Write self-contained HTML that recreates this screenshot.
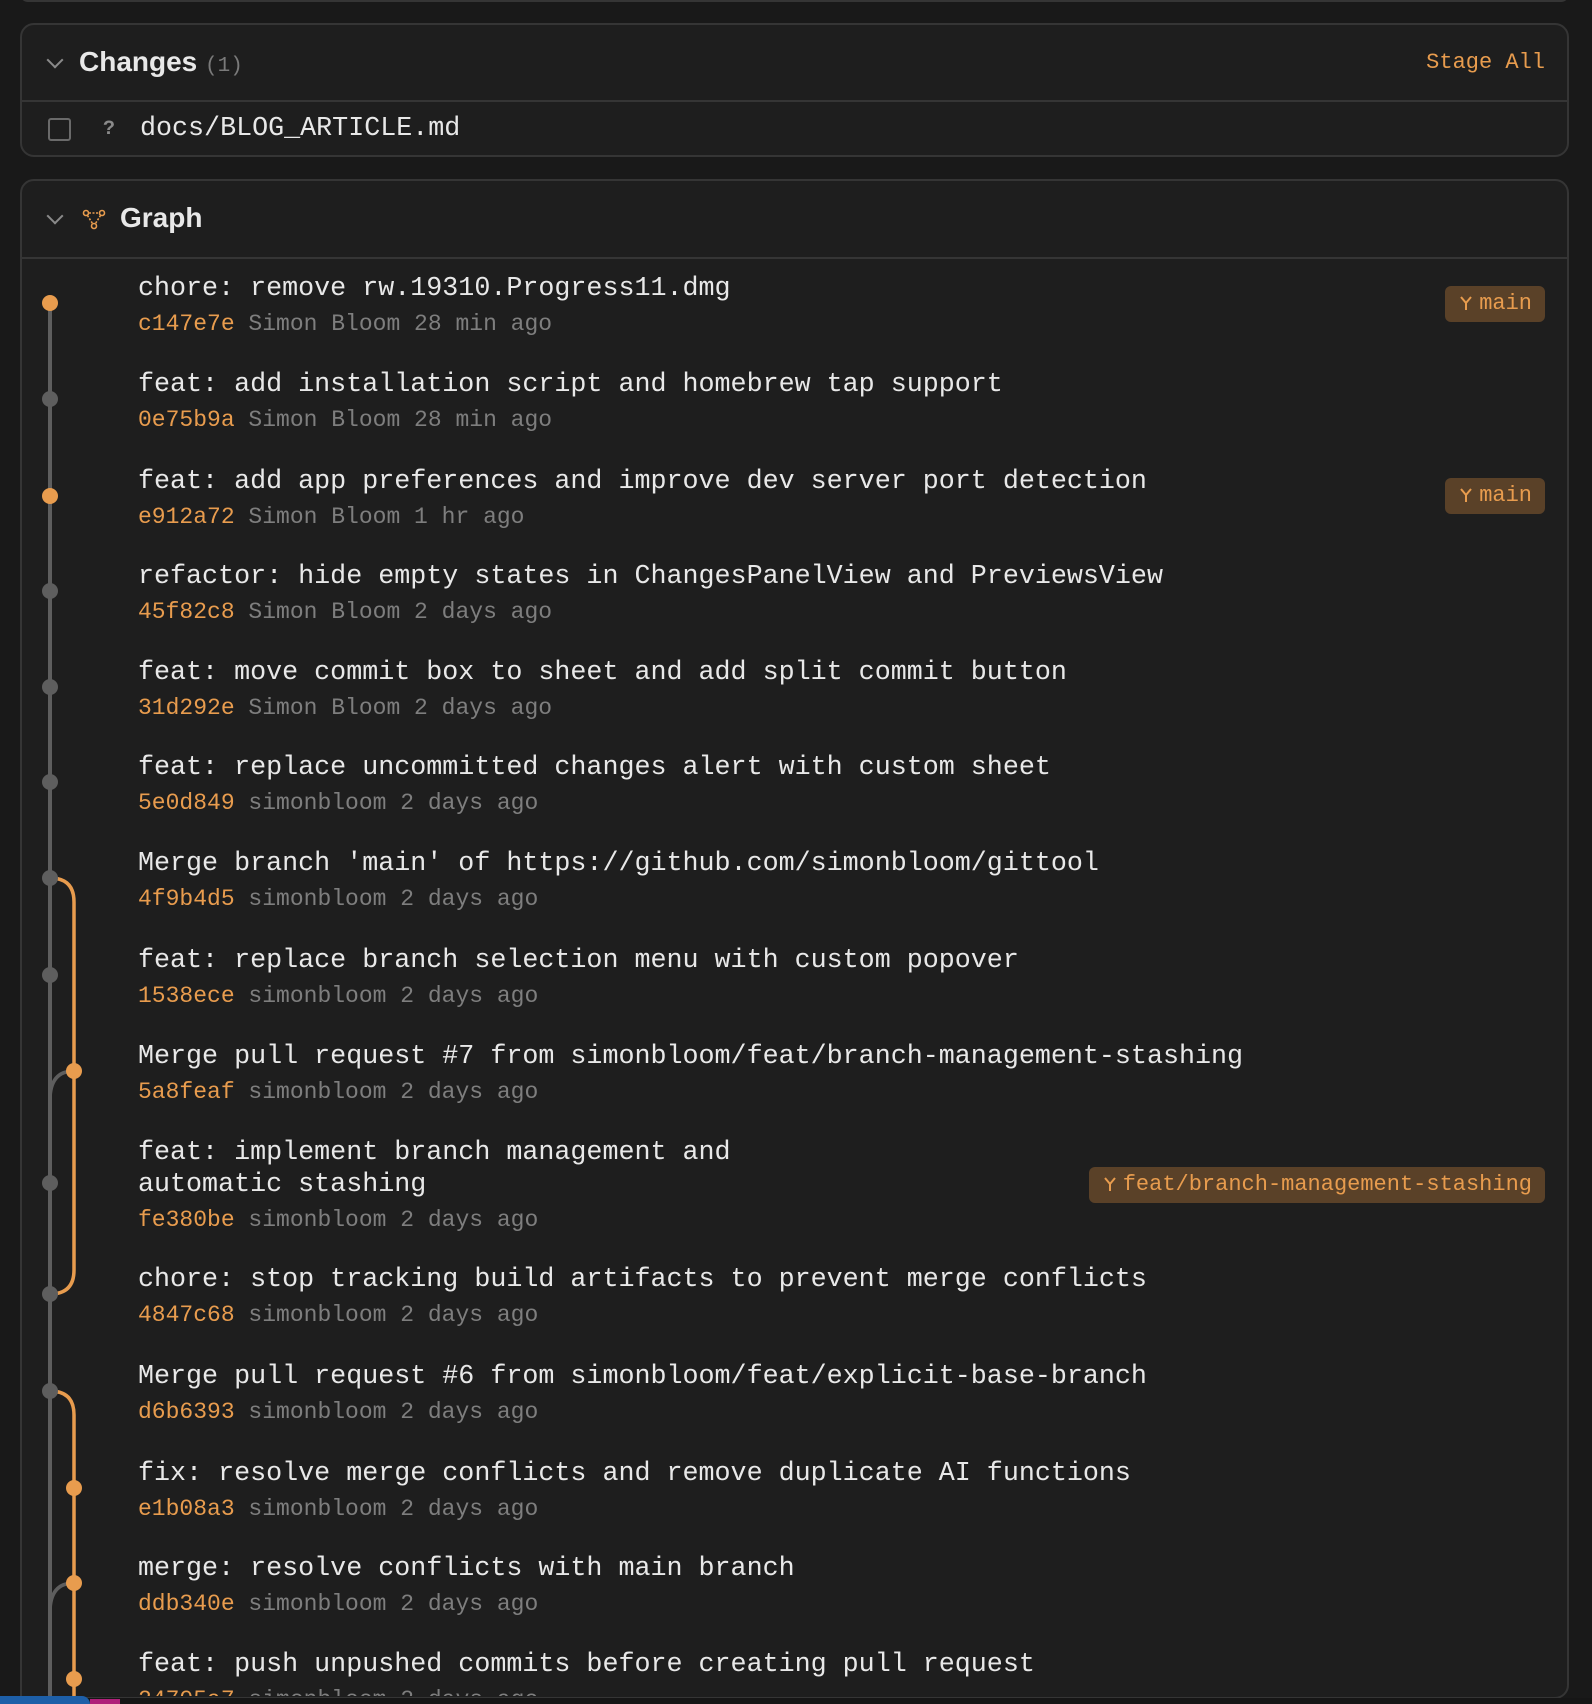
<!DOCTYPE html>
<html><head><meta charset="utf-8"><style>
html,body{margin:0;padding:0;background:#191919;width:1592px;height:1704px;overflow:hidden;position:relative;font-family:"Liberation Mono",monospace;}
.panel{position:absolute;left:20px;width:1549px;background:#1e1e1e;border:2px solid #353535;border-radius:14px;box-sizing:border-box;}
.hdr{position:absolute;left:0;right:0;border-bottom:2px solid #353535;}
.t{position:absolute;left:138px;white-space:pre;}
.t .a{font-size:26.7px;line-height:32px;color:#e8e8e8;height:32px;}
.t .b{font-size:23px;line-height:32px;color:#7e7e7e;margin-top:3px;}
.t .b span{color:#e89c4e;}
.badge{position:absolute;right:47px;height:36px;background:#5a4128;border-radius:6px;color:#e89c4e;font-size:22px;line-height:36px;padding:0 13px 0 14px;white-space:pre;}
.badge svg{vertical-align:-2px;margin-right:6px}
.chev{position:absolute;width:10px;height:10px;border-right:2px solid #8a8a8a;border-bottom:2px solid #8a8a8a;transform:rotate(45deg);}
</style></head><body>
<div style="position:absolute;left:20px;top:-14px;width:1549px;height:16px;border:2px solid #353535;border-radius:14px;box-sizing:border-box;background:#1e1e1e"></div>
<div class="panel" style="top:23px;height:134px;">
  <div class="hdr" style="top:0;height:75px;"></div>
  <div class="chev" style="left:27px;top:29px;"></div>
  <div style="position:absolute;left:57px;top:21px;font-family:'Liberation Sans',sans-serif;font-weight:bold;font-size:28px;color:#e8e8e8;">Changes <span style="font-family:'Liberation Mono',monospace;font-weight:normal;font-size:21px;color:#7a7a7a">(1)</span></div>
  <div style="position:absolute;right:22px;top:25px;font-size:22px;color:#e89c4e;">Stage All</div>
  <div style="position:absolute;left:26px;top:93px;width:19px;height:19px;border:2px solid #6a6a6a;border-radius:3px;"></div>
  <div style="position:absolute;left:81px;top:93px;font-size:20px;color:#8a8a8a;font-weight:bold">?</div>
  <div style="position:absolute;left:118px;top:89px;font-size:26.7px;color:#e8e8e8;">docs/BLOG_ARTICLE.md</div>
</div>
<div class="panel" style="top:179px;height:1520px;border-bottom-left-radius:0;">
  <div class="hdr" style="top:0;height:76px;"></div>
  <div class="chev" style="left:27px;top:29px;"></div>
  <svg style="position:absolute;left:60px;top:28px" width="24" height="22" viewBox="0 0 24 22"><g fill="none" stroke="#e89c4e" stroke-width="1.6"><circle cx="4" cy="4" r="2.5"/><circle cx="20" cy="4" r="2.5"/><circle cx="12" cy="17" r="2.5"/><path d="M7 4h10M5.5 6.5l5 8M18.5 6.5l-5 8" stroke-dasharray="2 1.5"/></g></svg>
  <div style="position:absolute;left:98px;top:21px;font-family:'Liberation Sans',sans-serif;font-weight:bold;font-size:28px;color:#e8e8e8;">Graph</div>
</div>
<div style="position:absolute;left:0;top:256px;width:1592px;height:1440px;overflow:hidden;">
<div style="position:absolute;left:0;top:-256px;width:1592px;height:1704px;">
<svg style="position:absolute;left:0;top:0" width="1592" height="1704">
  <g fill="none" stroke-width="3.5">
    <path d="M50 303 L50 1704" stroke="#5e5e5e" stroke-width="4"/>
    <path d="M50 878 Q74 878 74 902 L74 1270 Q74 1294 50 1294" stroke="#e89c4e"/>
    <path d="M50 1100 Q50 1071 74 1071" stroke="#5e5e5e"/>
    <path d="M50 1391 Q74 1391 74 1415 L74 1704" stroke="#e89c4e"/>
    <path d="M50 1612 Q50 1583 74 1583" stroke="#5e5e5e"/>
  </g>
  <g fill="#5e5e5e">
    <circle cx="50" cy="399" r="8"/><circle cx="50" cy="591" r="8"/><circle cx="50" cy="687" r="8"/><circle cx="50" cy="782" r="8"/><circle cx="50" cy="878" r="8"/><circle cx="50" cy="975" r="8"/><circle cx="50" cy="1183" r="8"/><circle cx="50" cy="1294" r="8"/><circle cx="50" cy="1391" r="8"/>
  </g>
  <g fill="#e89c4e">
    <circle cx="50" cy="303" r="8"/><circle cx="50" cy="496" r="8"/><circle cx="74" cy="1071" r="8"/><circle cx="74" cy="1488" r="8"/><circle cx="74" cy="1583" r="8"/><circle cx="74" cy="1679" r="8"/>
  </g>
</svg>
<div class="t" style="top:273px"><div class="a">chore: remove rw.19310.Progress11.dmg</div><div class="b"><span>c147e7e</span> Simon Bloom 28 min ago</div></div>
<div class="badge" style="top:286px"><svg width="14" height="16" viewBox="0 0 14 16"><path d="M2 2 L7 8 L12 2 M7 8 V15" fill="none" stroke="#e89c4e" stroke-width="2"/></svg>main</div>
<div class="t" style="top:369px"><div class="a">feat: add installation script and homebrew tap support</div><div class="b"><span>0e75b9a</span> Simon Bloom 28 min ago</div></div>
<div class="t" style="top:466px"><div class="a">feat: add app preferences and improve dev server port detection</div><div class="b"><span>e912a72</span> Simon Bloom 1 hr ago</div></div>
<div class="badge" style="top:478px"><svg width="14" height="16" viewBox="0 0 14 16"><path d="M2 2 L7 8 L12 2 M7 8 V15" fill="none" stroke="#e89c4e" stroke-width="2"/></svg>main</div>
<div class="t" style="top:561px"><div class="a">refactor: hide empty states in ChangesPanelView and PreviewsView</div><div class="b"><span>45f82c8</span> Simon Bloom 2 days ago</div></div>
<div class="t" style="top:657px"><div class="a">feat: move commit box to sheet and add split commit button</div><div class="b"><span>31d292e</span> Simon Bloom 2 days ago</div></div>
<div class="t" style="top:752px"><div class="a">feat: replace uncommitted changes alert with custom sheet</div><div class="b"><span>5e0d849</span> simonbloom 2 days ago</div></div>
<div class="t" style="top:848px"><div class="a">Merge branch 'main' of https://github.com/simonbloom/gittool</div><div class="b"><span>4f9b4d5</span> simonbloom 2 days ago</div></div>
<div class="t" style="top:945px"><div class="a">feat: replace branch selection menu with custom popover</div><div class="b"><span>1538ece</span> simonbloom 2 days ago</div></div>
<div class="t" style="top:1041px"><div class="a">Merge pull request #7 from simonbloom/feat/branch-management-stashing</div><div class="b"><span>5a8feaf</span> simonbloom 2 days ago</div></div>
<div class="t" style="top:1137px"><div class="a">feat: implement branch management and</div><div class="a">automatic stashing</div><div class="b"><span>fe380be</span> simonbloom 2 days ago</div></div>
<div class="badge" style="top:1167px"><svg width="14" height="16" viewBox="0 0 14 16"><path d="M2 2 L7 8 L12 2 M7 8 V15" fill="none" stroke="#e89c4e" stroke-width="2"/></svg>feat/branch-management-stashing</div>
<div class="t" style="top:1264px"><div class="a">chore: stop tracking build artifacts to prevent merge conflicts</div><div class="b"><span>4847c68</span> simonbloom 2 days ago</div></div>
<div class="t" style="top:1361px"><div class="a">Merge pull request #6 from simonbloom/feat/explicit-base-branch</div><div class="b"><span>d6b6393</span> simonbloom 2 days ago</div></div>
<div class="t" style="top:1458px"><div class="a">fix: resolve merge conflicts and remove duplicate AI functions</div><div class="b"><span>e1b08a3</span> simonbloom 2 days ago</div></div>
<div class="t" style="top:1553px"><div class="a">merge: resolve conflicts with main branch</div><div class="b"><span>ddb340e</span> simonbloom 2 days ago</div></div>
<div class="t" style="top:1649px"><div class="a">feat: push unpushed commits before creating pull request</div><div class="b"><span>24705a7</span> simonbloom 2 days ago</div></div>
</div></div>
<div style="position:absolute;left:0;top:1698px;width:1592px;height:6px;background:#161616"></div>
<div style="position:absolute;left:0;top:1696px;width:90px;height:8px;background:#1d5fa8;border-top-right-radius:8px"></div>
<div style="position:absolute;left:90px;top:1699px;width:30px;height:5px;background:#b0207a"></div>
</body></html>
